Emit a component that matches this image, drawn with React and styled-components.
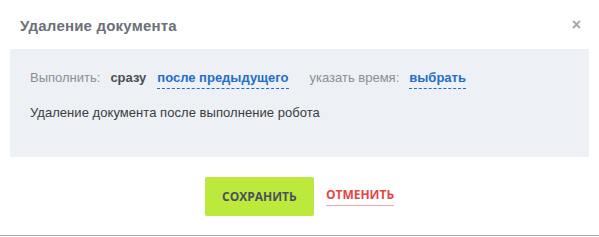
import React from 'react';
import styled, { createGlobalStyle } from 'styled-components';

const Global = createGlobalStyle`
  html, body { margin: 0; padding: 0; background: #fff; }
  body { font-family: "Liberation Sans", Arial, sans-serif; }
`;

const Modal = styled.div`
  width: 599px;
  height: 236px;
  background: #fff;
  display: flex;
  flex-direction: column;
  box-sizing: border-box;
  border-bottom: 1px solid #a9a9a9;
`;

const Header = styled.div`
  height: 49px;
  display: flex;
  align-items: center;
  justify-content: space-between;
  padding: 1px 18px 0 20px;
  box-sizing: border-box;
`;

const Title = styled.h2`
  margin: 0;
  font-size: 15px;
  font-weight: bold;
  letter-spacing: 0.2px;
  color: #6c7079;
`;

const Close = styled.button`
  border: none;
  background: none;
  padding: 0;
  color: #a3a6ab;
  font-size: 16px;
  font-weight: bold;
  cursor: pointer;
  line-height: 1;
`;

const Panel = styled.div`
  margin: 0 10px;
  height: 108px;
  background: #edf0f4;
  padding: 21px 20px 0;
  box-sizing: border-box;
`;

const Row = styled.div`
  display: flex;
  align-items: baseline;
  font-size: 13px;
  height: 18px;
`;

const Label = styled.span`
  color: #8b8f96;
  margin-right: ${p => p.$gap || 10}px;
`;

const Option = styled.span`
  font-weight: bold;
  color: ${p => (p.$link ? '#1f6ec9' : '#4a4d52')};
  margin-right: ${p => p.$gap || 0}px;
  padding-bottom: 3px;
  border-bottom: ${p => (p.$link ? '1px dashed #1f6ec9' : '1px solid transparent')};
  cursor: pointer;
`;

const Description = styled.p`
  margin: 17px 0 0;
  font-size: 13px;
  letter-spacing: 0.05px;
  color: #3b3d41;
`;

const Footer = styled.div`
  flex: 1;
  display: flex;
  align-items: center;
  justify-content: center;
  gap: 12px;
`;

const SaveButton = styled.button`
  width: 109px;
  height: 39px;
  border: none;
  border-radius: 2px;
  background: #bde83c;
  color: #4b4f5e;
  font-family: "Open Sans", sans-serif;
  font-weight: bold;
  font-size: 12px;
  cursor: pointer;
`;

const CancelLink = styled.a`
  font-family: "Open Sans", sans-serif;
  font-weight: bold;
  font-size: 12px;
  color: #e34545;
  padding-bottom: 2px;
  border-bottom: 1px solid #f2a6a6;
  cursor: pointer;
`;

export default function App() {
  return (
    <>
      <Global />
      <Modal>
        <Header>
          <Title>Удаление документа</Title>
          <Close>×</Close>
        </Header>
        <Panel>
          <Row>
            <Label>Выполнить:</Label>
            <Option $gap={11}>сразу</Option>
            <Option $link $gap={21}>после предыдущего</Option>
            <Label $gap={10}>указать время:</Label>
            <Option $link>выбрать</Option>
          </Row>
          <Description>Удаление документа после выполнение робота</Description>
        </Panel>
        <Footer>
          <SaveButton>СОХРАНИТЬ</SaveButton>
          <CancelLink>ОТМЕНИТЬ</CancelLink>
        </Footer>
      </Modal>
    </>
  );
}
